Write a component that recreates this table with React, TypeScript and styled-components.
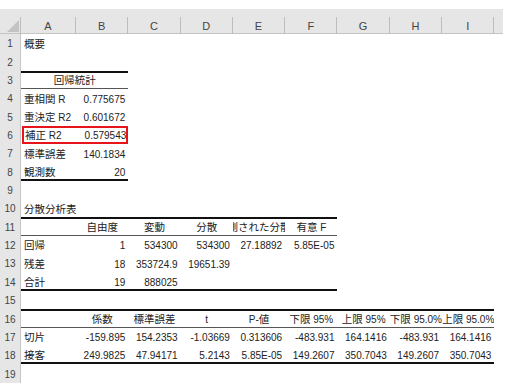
import React from "react"
import styled, { createGlobalStyle } from "styled-components"

const GlobalStyle = createGlobalStyle`
	html, body {
		margin: 0;
		padding: 0;
		background: #fff;
	}
	body {
		width: 512px;
		height: 384px;
		overflow: hidden;
	}
`

const ROW_H = 18.35
const COL_W = 52.3
const COLS = ["A", "B", "C", "D", "E", "F", "G", "H", "I"]

type Line = "thick" | "thin"
type Align = "l" | "r" | "c"
type CellSpec = { v: string; a?: Align; span?: number }
type RowSpec = {
	cells?: Record<string, CellSpec>
	lines?: { to: number; top?: Line; bottom?: Line }
	box?: boolean
}

const shadowFor = (top?: Line, bottom?: Line) => {
	const s: string[] = []
	if (top) s.push(`inset 0 ${top === "thick" ? 2 : 1}px 0 ${top === "thick" ? "#111" : "#555"}`)
	if (bottom) s.push(`inset 0 -${bottom === "thick" ? 2 : 1}px 0 ${bottom === "thick" ? "#111" : "#555"}`)
	return s.length ? s.join(", ") : "none"
}

const Sheet = styled.div`
	display: grid;
	grid-template-columns: 21px 55px repeat(8, ${COL_W}px) 8.6px;
	grid-template-rows: 25px repeat(19, ${ROW_H}px);
	margin-top: 9px;
	width: 503px;
`

const Corner = styled.div`
	background: #e6e6e6;
	box-sizing: border-box;
	border-right: 1px solid #bdbdbd;
	border-image: linear-gradient(to bottom, transparent 8px, #bdbdbd 8px) 1;
	box-shadow: inset 0 -1px 0 #c4c4c4;

	svg {
		display: block;
	}
`

const ColHead = styled.div<{ $last?: boolean }>`
	background: #e6e6e6;
	color: #444;
	font: 11px/12px "Liberation Sans", Arial, sans-serif;
	display: flex;
	align-items: flex-end;
	justify-content: center;
	padding-bottom: 2.5px;
	box-sizing: border-box;
	border-right: ${p => (p.$last ? "none" : "1px solid #bdbdbd")};
	border-image: ${p => (p.$last ? "none" : "linear-gradient(to bottom, transparent 8px, #bdbdbd 8px) 1")};
	box-shadow: inset 0 -1px 0 #c4c4c4;
`

const RowHead = styled.div`
	background: #e6e6e6;
	color: #444;
	font: 10px/12px "Liberation Sans", Arial, sans-serif;
	display: flex;
	align-items: flex-end;
	justify-content: center;
	padding-bottom: 2px;
	box-sizing: border-box;
	border-right: 1px solid #c6c6c6;
`

const Cell = styled.div<{ $align: Align; $span: number; $top?: Line; $bottom?: Line }>`
	grid-column: span ${p => p.$span};
	display: flex;
	align-items: flex-end;
	justify-content: ${p => (p.$align === "r" ? "flex-end" : p.$align === "c" ? "center" : "flex-start")};
	padding: 0 3px 1.8px;
	box-sizing: border-box;
	min-width: 0;
	overflow: ${p => (p.$align === "c" ? "hidden" : "visible")};
	white-space: nowrap;
	font: 10px/12px "Liberation Sans", Arial, "Noto Sans CJK JP", sans-serif;
	color: #222;
	box-shadow: ${p => shadowFor(p.$top, p.$bottom)};
`

const Text = styled.span`
	display: block;
	flex: none;
	white-space: pre;
`

const Highlight = styled.div<{ $span: number }>`
	grid-column: span ${p => p.$span};
	display: grid;
	grid-template-columns: 55px ${COL_W}px;
	outline: 2px solid #e8141b;
	outline-offset: -2px;
	margin-left: 1px;
	min-width: 0;
`

const Jp = styled.span`
	font-family: "Noto Sans CJK JP", sans-serif;
	font-size: 10.5px;
`

const renderText = (s: string) =>
	s.split(/([\u3040-\u30ff\u3400-\u9fff]+)/).map((part, i) =>
		i % 2 ? <Jp key={i}>{part}</Jp> : part,
	)

const isNum = (s: string) => /^-?[\d.]+(E-?\d+)?$/.test(s)

const rows: RowSpec[] = [
	{ cells: { A: { v: "概要" } } },
	{},
	{
		cells: { A: { v: "回帰統計", a: "c", span: 2 } },
		lines: { to: 2, top: "thick", bottom: "thin" },
	},
	{ cells: { A: { v: "重相関 R" }, B: { v: "0.775675" } } },
	{ cells: { A: { v: "重決定 R2" }, B: { v: "0.601672" } } },
	{ cells: { A: { v: "補正 R2" }, B: { v: "0.579543" } }, box: true },
	{ cells: { A: { v: "標準誤差" }, B: { v: "140.1834" } } },
	{ cells: { A: { v: "観測数" }, B: { v: "20" } }, lines: { to: 2, bottom: "thick" } },
	{},
	{ cells: { A: { v: "分散分析表" } } },
	{
		cells: {
			B: { v: "自由度", a: "c" },
			C: { v: "変動", a: "c" },
			D: { v: "分散", a: "c" },
			E: { v: "観測された分散比", a: "c" },
			F: { v: "有意 F", a: "c" },
		},
		lines: { to: 6, top: "thick", bottom: "thin" },
	},
	{
		cells: {
			A: { v: "回帰" },
			B: { v: "1" },
			C: { v: "534300" },
			D: { v: "534300" },
			E: { v: "27.18892" },
			F: { v: "5.85E-05" },
		},
	},
	{ cells: { A: { v: "残差" }, B: { v: "18" }, C: { v: "353724.9" }, D: { v: "19651.39" } } },
	{ cells: { A: { v: "合計" }, B: { v: "19" }, C: { v: "888025" } }, lines: { to: 6, bottom: "thick" } },
	{},
	{
		cells: {
			B: { v: "係数", a: "c" },
			C: { v: "標準誤差", a: "c" },
			D: { v: "t", a: "c" },
			E: { v: "P-値", a: "c" },
			F: { v: "下限 95%", a: "c" },
			G: { v: "上限 95%", a: "c" },
			H: { v: "下限 95.0%", a: "c" },
			I: { v: "上限 95.0%", a: "c" },
		},
		lines: { to: 9, top: "thick", bottom: "thin" },
	},
	{
		cells: {
			A: { v: "切片" },
			B: { v: "-159.895" },
			C: { v: "154.2353" },
			D: { v: "-1.03669" },
			E: { v: "0.313606" },
			F: { v: "-483.931" },
			G: { v: "164.1416" },
			H: { v: "-483.931" },
			I: { v: "164.1416" },
		},
	},
	{
		cells: {
			A: { v: "接客" },
			B: { v: "249.9825" },
			C: { v: "47.94171" },
			D: { v: "5.2143" },
			E: { v: "5.85E-05" },
			F: { v: "149.2607" },
			G: { v: "350.7043" },
			H: { v: "149.2607" },
			I: { v: "350.7043" },
		},
		lines: { to: 9, bottom: "thick" },
	},
	{},
]

const SheetRow = ({ row, n }: { row: RowSpec; n: number }) => {
	const out: React.ReactNode[] = [<RowHead key="h">{n}</RowHead>]
	const lineProps = (ci: number) => {
		const inLine = row.lines && ci < row.lines.to
		return {
			$top: inLine ? row.lines!.top : undefined,
			$bottom: inLine ? row.lines!.bottom : undefined,
		}
	}
	const cellFor = (ci: number, key: string) => {
		const spec = row.cells?.[COLS[ci]]
		const v = spec?.v ?? ""
		return (
			<Cell key={key} $span={spec?.span ?? 1} $align={spec?.a ?? (isNum(v) ? "r" : "l")} {...lineProps(ci)}>
				{v && <Text>{renderText(v)}</Text>}
			</Cell>
		)
	}

	let ci = 0
	while (ci < COLS.length) {
		if (row.box && ci === 0) {
			out.push(
				<Highlight key="box" $span={2}>
					{cellFor(0, "a")}
					{cellFor(1, "b")}
				</Highlight>,
			)
			ci += 2
			continue
		}
		const span = row.cells?.[COLS[ci]]?.span ?? 1
		out.push(cellFor(ci, COLS[ci]))
		ci += span
	}
	out.push(<div key="j" />)
	return <>{out}</>
}

export default function App() {
	return (
		<>
			<GlobalStyle />
			<Sheet>
				<Corner>
					<svg width="21" height="25" viewBox="0 0 21 25">
						<polygon points="19,11 19,23 7,23" fill="#c3c3c3" />
					</svg>
				</Corner>
				{COLS.map(c => (
					<ColHead key={c}>{c}</ColHead>
				))}
				<ColHead $last />
				{rows.map((r, i) => (
					<SheetRow key={i} row={r} n={i + 1} />
				))}
			</Sheet>
		</>
	)
}
